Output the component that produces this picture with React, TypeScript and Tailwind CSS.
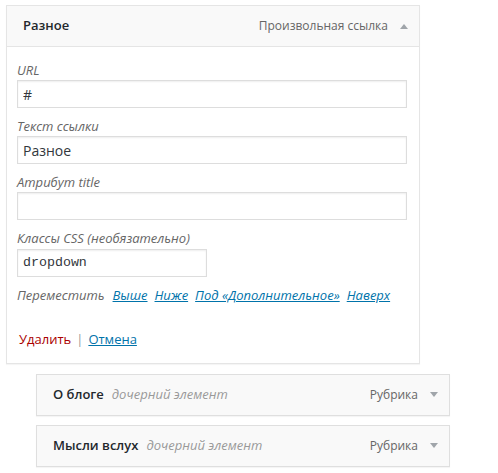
const Arrow = ({ up }: { up?: boolean }) => (
  <svg width="8" height="5" viewBox="0 0 8 5" className="fill-[#a0a5aa]">
    {up ? <path d="M0 5 L4 0 L8 5 Z" /> : <path d="M0 0 L8 0 L4 5 Z" />}
  </svg>
);

const Field = ({ label, value, narrow, mono }: { label: string; value: string; narrow?: boolean; mono?: boolean }) => (
  <div className="mb-2">
    <div className="h-5 leading-5 text-[13px] italic text-[#666]">{label}</div>
    <input
      readOnly
      value={value}
      className={`h-7 border border-[#ddd] bg-white px-[5px] text-[#32373c] shadow-[inset_0_1px_2px_rgba(0,0,0,0.07)] outline-none ${
        narrow ? "w-[190px]" : "w-[390px]"
      } ${mono ? "font-['Liberation_Mono',monospace] text-[13.3px]" : "text-[14px]"}`}
    />
  </div>
);

const SubItem = ({ title }: { title: string }) => (
  <div className="flex h-[42px] w-[414px] items-center border border-[#dfdfdf] bg-[#f9f9f9] pl-4 pr-[11px] shadow-[0_1px_1px_rgba(0,0,0,0.04)]">
    <span className="text-[13px] font-semibold text-[#23282d]">{title}</span>
    <span className="ml-2 text-[13px] italic text-[#999]">дочерний элемент</span>
    <span className="ml-auto text-[12px] text-[#666]">Рубрика</span>
    <span className="ml-[12px] flex w-2 justify-center">
      <Arrow />
    </span>
  </div>
);

export default function App() {
  return (
    <div className="min-h-[473px] bg-white pl-[6px] pt-[5px] font-['Open_Sans',sans-serif] text-[#23282d]">
      <div className="w-[414px] border border-[#e5e5e5] shadow-[0_1px_1px_rgba(0,0,0,0.04)]">
        <div className="flex h-[41px] items-center border-b border-[#e5e5e5] bg-[#f9f9f9] pl-4 pr-[11px]">
          <span className="text-[13px] font-semibold">Разное</span>
          <span className="ml-auto text-[12px] text-[#666]">Произвольная ссылка</span>
          <span className="ml-[12px] flex w-2 justify-center">
            <Arrow up />
          </span>
        </div>
        <div className="bg-white pl-[10px] pt-[13px]">
          <Field label="URL" value="#" />
          <Field label="Текст ссылки" value="Разное" />
          <Field label="Атрибут title" value="" />
          <Field label="Классы CSS (необязательно)" value="dropdown" narrow mono />
          <div className="mt-[6px] flex gap-[7px] text-[13px] leading-5">
            <span className="mr-[1px] italic text-[#666]">Переместить</span>
            <a className="italic text-[#0073aa] underline">Выше</a>
            <a className="italic text-[#0073aa] underline">Ниже</a>
            <a className="italic text-[#0073aa] underline">Под «Дополнительное»</a>
            <a className="italic text-[#0073aa] underline">Наверх</a>
          </div>
          <div className="mt-[24px] flex items-center pb-[14px] pl-[2px] text-[13px] leading-5">
            <a className="text-[#a00]">Удалить</a>
            <span className="mx-[5px] text-[#999]">|</span>
            <a className="text-[#0073aa] underline">Отмена</a>
          </div>
        </div>
      </div>
      <div className="ml-[30px] mt-[10px] flex flex-col gap-[9px]">
        <SubItem title="О блоге" />
        <SubItem title="Мысли вслух" />
      </div>
    </div>
  );
}
